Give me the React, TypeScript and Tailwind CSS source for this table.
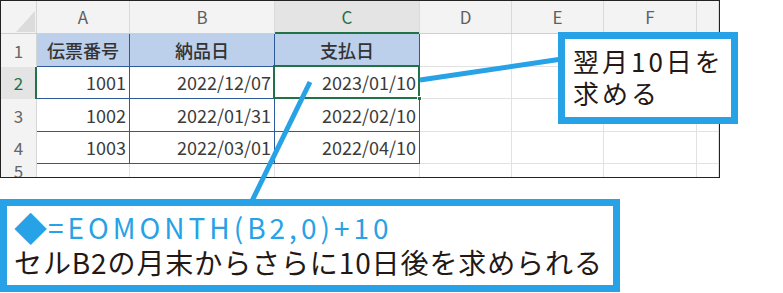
import React from 'react'

const jp = "font-['Noto_Sans_CJK_JP',_'Noto_Sans',_sans-serif]"

const cols = ['A', 'B', 'C', 'D', 'E', 'F', '']
const colWidths = ['w-[93px]', 'w-[145px]', 'w-[145px]', 'w-[92px]', 'w-[92px]', 'w-[93px]', 'flex-1']
const rowHeights = ['h-[33px]', 'h-[32px]', 'h-[33px]', 'h-[32px]', 'h-[13px]']

const header = ['伝票番号', '納品日', '支払日']
const rows = [
  ['1001', '2022/12/07', '2023/01/10'],
  ['1002', '2022/01/31', '2022/02/10'],
  ['1003', '2022/03/01', '2022/04/10'],
]

function CornerCell() {
  return (
    <div className="relative h-full w-[36px] shrink-0 border-r border-[#d6d6d6] bg-[#f3f3f3]">
      <svg className="absolute left-[15px] top-[10px]" width="19" height="21" viewBox="0 0 19 21">
        <polygon points="19,0 19,21 0,21" fill="#dcdcdc" />
      </svg>
    </div>
  )
}

function ColumnHeader() {
  return (
    <div className="flex h-[33px] border-b border-[#cfcfcf]">
      <CornerCell />
      {cols.map((c, i) => (
        <div
          key={i}
          className={`relative flex shrink-0 items-center justify-center border-r border-[#dadada] text-[17px] ${colWidths[i]} ${
            c === 'C' ? 'bg-[#e4e4e4] text-[#217346]' : 'bg-[#f3f3f3] text-[#5f5f5f]'
          }`}
        >
          {c}
          {c === 'C' && <div className="absolute -bottom-px left-0 right-0 h-[2px] bg-[#217346]" />}
        </div>
      ))}
    </div>
  )
}

function RowHeader({ n, selected }: { n: number; selected?: boolean }) {
  return (
    <div
      className={`relative flex w-[36px] shrink-0 items-center justify-center border-r border-[#d6d6d6] text-[17px] ${
        selected ? 'bg-[#e4e4e4] text-[#217346]' : 'bg-[#f3f3f3] text-[#666]'
      }`}
    >
      {n}
      {selected && <div className="absolute -right-px top-0 bottom-0 w-[2px] bg-[#217346]" />}
    </div>
  )
}

function Sheet() {
  return (
    <div className={`h-[178px] w-[720px] overflow-hidden border border-[#222] bg-white ${jp}`}>
      <ColumnHeader />

      {/* row 1: table header */}
      <div className={`flex ${rowHeights[0]}`}>
        <RowHeader n={1} />
        {header.map((h, i) => (
          <div
            key={h}
            className={`flex shrink-0 items-center justify-center border-r border-b border-[#2e5a9c] bg-[#bcd0eb] text-[18px] font-medium text-[#333] ${colWidths[i]}`}
          >
            {h}
          </div>
        ))}
        {colWidths.slice(3).map((w, i) => (
          <div key={i} className={`shrink-0 border-r border-b border-[#e2e2e2] ${w}`} />
        ))}
      </div>

      {/* rows 2-4: data */}
      {rows.map((r, ri) => (
        <div key={ri} className={`flex ${rowHeights[ri + 1]}`}>
          <RowHeader n={ri + 2} selected={ri === 0} />
          {r.map((v, ci) => (
            <div
              key={ci}
              className={`relative flex shrink-0 items-center justify-end border-r border-b border-[#2e5a9c] pr-[3px] text-[18px] text-[#3b3b3b] ${colWidths[ci]}`}
            >
              {v}
              {ri === 0 && ci === 2 && (
                <>
                  <div className="absolute -left-[2px] -top-[2px] -right-px -bottom-px border-2 border-[#217346]" />
                  <div className="absolute -right-[3px] -bottom-[3px] h-[5px] w-[5px] border border-white bg-[#217346]" />
                </>
              )}
            </div>
          ))}
          {colWidths.slice(3).map((w, i) => (
            <div key={i} className={`shrink-0 border-r border-b border-[#e2e2e2] ${w}`} />
          ))}
        </div>
      ))}

      {/* row 5, cut off */}
      <div className={`flex ${rowHeights[4]}`}>
        <RowHeader n={5} />
        {colWidths.map((w, i) => (
          <div key={i} className={`shrink-0 border-r border-[#e2e2e2] ${w}`} />
        ))}
      </div>
    </div>
  )
}

export default function App() {
  return (
    <div className={`relative h-[293px] w-[783px] overflow-hidden bg-white ${jp}`}>
      <Sheet />

      <div className="mt-[21px] h-[93px] w-[620px] border-[7px] border-[#27a2e6] bg-white pl-[7px] pt-[4px]">
        <div className="flex h-[35px] items-center text-[28px] leading-[35px] tracking-[4px] text-[#27a2e6]">
          <span className="mr-[1px] text-[33px] tracking-normal">◆</span>=EOMONTH(B2,0)+10
        </div>
        <div className="text-[28px] leading-[35px] tracking-[0.9px] text-[#231815]">
          セルB2の月末からさらに10日後を求められる
        </div>
      </div>

      {/* connector lines */}
      <svg className="absolute left-0 top-0" width="783" height="293" viewBox="0 0 783 293">
        <line x1="420" y1="80" x2="562" y2="59" stroke="#27a2e6" strokeWidth="5" />
        <line x1="310" y1="82" x2="251" y2="203" stroke="#27a2e6" strokeWidth="5" />
      </svg>

      <div className="absolute left-[558px] top-[32px] h-[92px] w-[180px] border-[7px] border-[#27a2e6] bg-white pl-[8px] pt-[6px] text-[26px] leading-[32px] tracking-[3px] text-[#231815]">
        <div>翌月10日を</div>
        <div>求める</div>
      </div>
    </div>
  )
}
